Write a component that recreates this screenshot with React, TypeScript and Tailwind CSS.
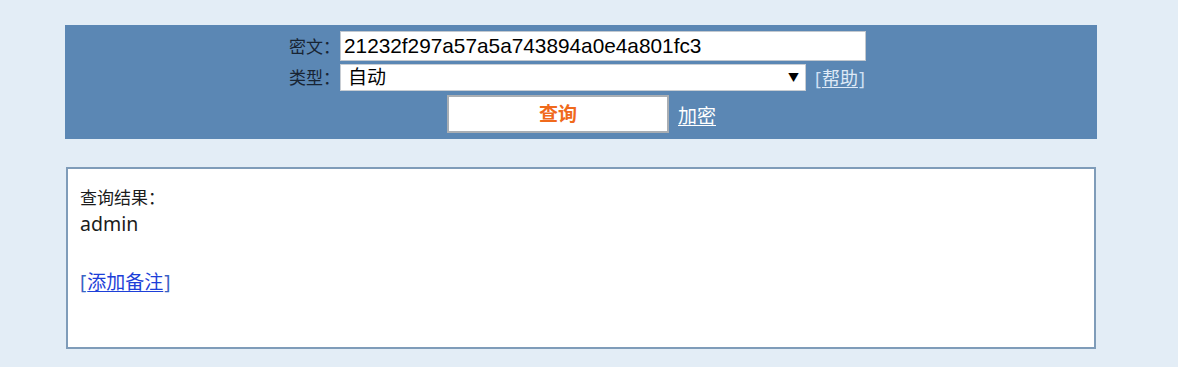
import React from "react";

export default function App() {
  const cjk = { fontFamily: '"Noto Sans", "Noto Sans CJK SC", sans-serif' };
  return (
    <div
      className="min-h-[367px] w-[1178px] bg-[#e3edf6] pt-[25px] text-[#1b1b1b]"
      style={cjk}
    >
      <div className="ml-[65px] h-[114px] w-[1032px] bg-[#5b87b4] pt-[6px]">
        <div className="flex h-[30px] items-center">
          <div className="w-[275px] text-right text-[17px] leading-none text-[#182433]">密文：</div>
          <div
            className="flex h-[30px] w-[526px] items-center border border-[#c2c8cf] bg-white pl-[3px] text-[20.8px] leading-none text-black"
            style={{ fontFamily: '"Liberation Sans", Arial, sans-serif' }}
          >
            21232f297a57a5a743894a0e4a801fc3
          </div>
        </div>
        <div className="mt-[3px] flex h-[27px] items-center">
          <div className="w-[275px] text-right text-[17px] leading-none text-[#182433]">类型：</div>
          <div className="flex h-[27px] w-[466px] items-center justify-between border border-[#c8cdd3] bg-white pl-[7px] pr-[6px]">
            <span className="text-[19px] leading-none text-black">自动</span>
            <span className="text-[11px] leading-none text-black">▼</span>
          </div>
          <div className="ml-[9px] text-[18px] leading-none text-[#cfe0f4]">
            [<span className="mx-[1px] text-[#dfeaf7] underline underline-offset-2">帮助</span>]
          </div>
        </div>
        <div className="mt-[4px] flex h-[38px] items-center">
          <div className="ml-[382px] flex h-[38px] w-[222px] items-center justify-center border-2 border-[#a9aeb3] bg-white text-[19px] font-bold leading-none text-[#f06a1c]">
            查询
          </div>
          <div className="ml-[9px] pt-[4px] text-[19px] leading-none text-white underline underline-offset-2">加密</div>
        </div>
      </div>
      <div className="ml-[66px] mt-[28px] h-[182px] w-[1030px] border-2 border-[#7f9cb9] bg-white pl-[12px] pt-[19px]">
        <div className="text-[17px] leading-[20px] text-[#1b1b1b]">查询结果：</div>
        <div className="mt-[5px] text-[19.5px] leading-[22px] text-[#1b1b1b]">admin</div>
        <div className="mt-[36px] text-[19px] leading-[22px] text-[#3a63c4]">
          [<span className="mx-[1px] text-[#1d3fd8] underline underline-offset-2">添加备注</span>]
        </div>
      </div>
    </div>
  );
}
